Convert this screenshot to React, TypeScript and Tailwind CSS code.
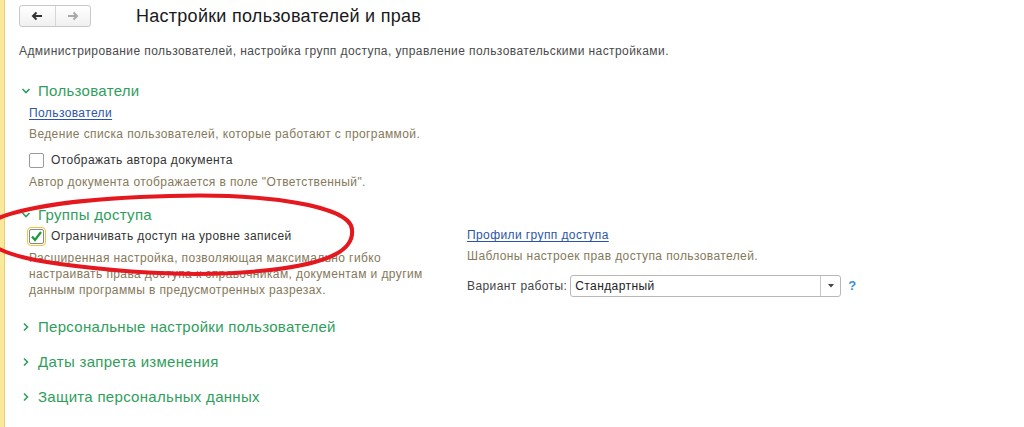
import { Fragment } from 'react';

const font = { fontFamily: '"Liberation Sans", Arial, sans-serif' };

function ChevronDown() {
  return (
    <svg width="10" height="10" viewBox="0 0 10 10" className="shrink-0">
      <path d="M1.5 3 L5 6.5 L8.5 3" fill="none" stroke="#2f9e5c" strokeWidth="1.6" />
    </svg>
  );
}

function ChevronRight() {
  return (
    <svg width="10" height="10" viewBox="0 0 10 10" className="shrink-0">
      <path d="M3 1.5 L6.5 5 L3 8.5" fill="none" stroke="#2f9e5c" strokeWidth="1.6" />
    </svg>
  );
}

function Heading({ title, open, className }: { title: string; open?: boolean; className?: string }) {
  return (
    <div className={`flex items-center h-[20px] gap-[7px] pl-[2px] ${className ?? ''}`}>
      {open ? <ChevronDown /> : <ChevronRight />}
      <span className="text-[15px] leading-[20px] tracking-[0.3px] text-[#2f9e5c]">{title}</span>
    </div>
  );
}

function Checkbox({ checked, label }: { checked?: boolean; label: string }) {
  return (
    <div className="flex items-center h-[16px] gap-[7px]">
      <div
        className={`w-[15px] h-[15px] rounded-[2px] border flex items-center justify-center bg-white ${
          checked ? 'border-[#888] outline outline-[1.5px] outline-offset-[1px] outline-[#f2c53d]' : 'border-[#9a9a9a]'
        }`}
      >
        {checked && (
          <svg width="13" height="13" viewBox="0 0 13 13">
            <path d="M2 6.5 L5 10 L11 2" fill="none" stroke="#1b9a3a" strokeWidth="2.2" />
          </svg>
        )}
      </div>
      <span className="text-[12px] leading-[16px] tracking-[0.4px] text-[#333]">{label}</span>
    </div>
  );
}

const hint = 'text-[12px] leading-[16px] tracking-[0.4px] text-[#85795a]';
const link = 'block w-fit text-[12px] leading-[16px] tracking-[0.4px] text-[#2c55a8] underline underline-offset-2';

export default function App() {
  const descLines = [
    'Расширенная настройка, позволяющая максимально гибко',
    'настраивать права доступа к справочникам, документам и другим',
    'данным программы в предусмотренных разрезах.',
  ];

  return (
    <div className="relative w-[1024px] h-[427px] bg-white overflow-hidden flex" style={font}>
      <div className="w-[5px] shrink-0 bg-[#fbe99a] border-r border-[#e8cf6a]" />
      <div className="pl-[14px] flex-1">
        <div className="flex items-center h-[22px] mt-[5px]">
          <div className="flex w-[72px] h-[22px] border border-[#c8c8c8] rounded-[3px] bg-gradient-to-b from-white to-[#f0f0f0]">
            <div className="flex-1 flex items-center justify-center border-r border-[#d6d6d6]">
              <svg width="12" height="10" viewBox="0 0 12 10">
                <path d="M11 5 H3 M5.5 1.5 L2 5 L5.5 8.5" fill="none" stroke="#333" strokeWidth="2" />
              </svg>
            </div>
            <div className="flex-1 flex items-center justify-center">
              <svg width="12" height="10" viewBox="0 0 12 10">
                <path d="M1 5 H9 M6.5 1.5 L10 5 L6.5 8.5" fill="none" stroke="#a8a8a8" strokeWidth="2" />
              </svg>
            </div>
          </div>
          <h1 className="ml-[45px] text-[18px] leading-[22px] tracking-[0.27px] text-[#1a1a1a]">
            Настройки пользователей и прав
          </h1>
        </div>

        <p className="mt-[16px] text-[12px] leading-[16px] tracking-[0.42px] text-[#4a4a4a]">
          Администрирование пользователей, настройка групп доступа, управление пользовательскими настройками.
        </p>

        <Heading title="Пользователи" open className="mt-[22px]" />
        <div className="pl-[10px]">
          <a className={`mt-[4px] ${link}`}>Пользователи</a>
          <p className={`mt-[5px] ${hint}`}>Ведение списка пользователей, которые работают с программой.</p>
          <div className="mt-[10px]">
            <Checkbox label="Отображать автора документа" />
          </div>
          <p className={`mt-[6px] ${hint}`}>Автор документа отображается в поле "Ответственный".</p>
        </div>

        <Heading title="Группы доступа" open className="mt-[15px]" />
        <div className="pl-[10px] flex h-[75px]">
          <div className="w-[438px] shrink-0">
            <div className="mt-[3px]">
              <Checkbox checked label="Ограничивать доступ на уровне записей" />
            </div>
            <p className={`mt-[6px] ${hint}`}>
              {descLines.map((l, i) => (
                <Fragment key={i}>
                  {l}
                  {i < descLines.length - 1 && <br />}
                </Fragment>
              ))}
            </p>
          </div>
          <div>
            <a className={`mt-[2px] ${link}`}>Профили групп доступа</a>
            <p className={`mt-[5px] ${hint}`}>Шаблоны настроек прав доступа пользователей.</p>
            <div className="mt-[11px] flex items-center h-[22px]">
              <span className="text-[12px] tracking-[0.4px] text-[#444] mr-[3px]">Вариант работы:</span>
              <div className="flex w-[271px] h-[22px] border border-[#b8b8b8] rounded-[3px]">
                <span className="flex-1 pl-[4px] text-[12px] leading-[20px] tracking-[0.4px] text-[#222]">Стандартный</span>
                <div className="w-[20px] border-l border-[#c8c8c8] flex items-center justify-center">
                  <svg width="6" height="4" viewBox="0 0 6 4">
                    <path d="M0 0 H6 L3 3.5 Z" fill="#444" />
                  </svg>
                </div>
              </div>
              <span className="ml-[7px] text-[13px] font-bold text-[#3b8fd9]">?</span>
            </div>
          </div>
        </div>

        <Heading title="Персональные настройки пользователей" className="mt-[17px]" />
        <Heading title="Даты запрета изменения" className="mt-[15px]" />
        <Heading title="Защита персональных данных" className="mt-[15px]" />
      </div>

      <svg className="absolute left-0 top-0 pointer-events-none" width="1024" height="427">
        <path
          d="M352 230 C352 205 260 193 170 196 C90 198 20 206 -10 222 C-30 240 0 256 60 264 C120 272 200 278 270 270 C330 263 354 250 352 230 Z"
          fill="none"
          stroke="#e5171f"
          strokeWidth="4"
        />
      </svg>
    </div>
  );
}
